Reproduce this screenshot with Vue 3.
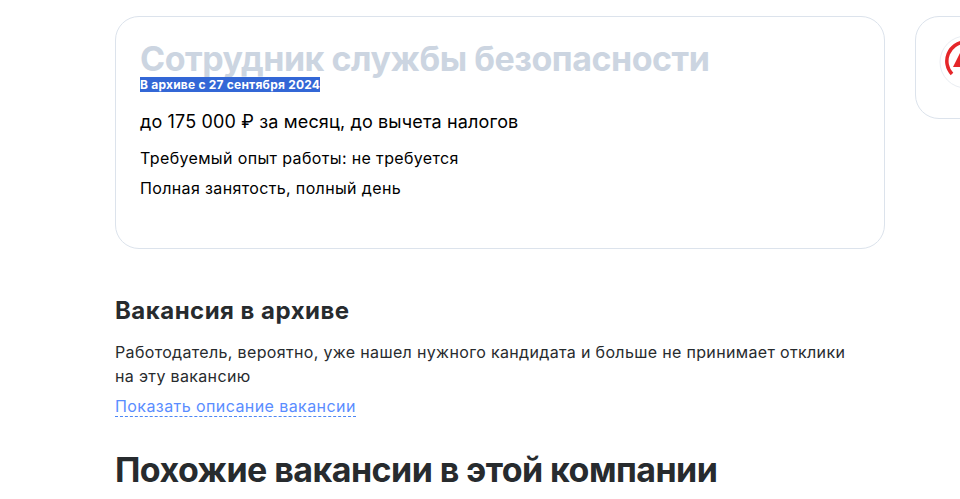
<script setup>
const conditions = ['Требуемый опыт работы: не требуется', 'Полная занятость, полный день'];
</script>

<template>
  <div class="page">
    <div class="top-row">
      <section class="card">
        <h1 class="title">Сотрудник службы безопасности</h1>
        <div class="archived"><span class="selected">В архиве с 27 сентября 2024</span></div>
        <p class="salary">до 175 000 ₽ за месяц, до вычета налогов</p>
        <p v-for="item in conditions" :key="item" class="condition">{{ item }}</p>
      </section>
      <aside class="side-card">
        <svg class="logo" width="54" height="54" viewBox="0 0 54 54">
          <circle cx="27" cy="25" r="26" fill="#fff" stroke="#e9edf2" />
          <path d="M13 37 A19 19 0 0 1 26 5" fill="none" stroke="#e52629" stroke-width="3.5" />
          <path d="M14 30 L22 14 L30 30 Z" fill="#e52629" />
        </svg>
      </aside>
    </div>

    <h2 class="subtitle">Вакансия в архиве</h2>
    <p class="note">Работодатель, вероятно, уже нашел нужного кандидата и больше не принимает отклики на эту вакансию</p>
    <a class="show-link">Показать описание вакансии</a>
    <h2 class="similar">Похожие вакансии в этой компании</h2>
  </div>
</template>

<style scoped>
.page {
  height: 499px;
  overflow: hidden;
  box-sizing: border-box;
  padding: 16px 0 0 115px;
  font-family: Inter, "Liberation Sans", sans-serif;
  color: #000;
}
.top-row {
  display: flex;
  gap: 30px;
  align-items: flex-start;
  width: 900px;
}
.card {
  flex: 0 0 770px;
  box-sizing: border-box;
  height: 233px;
  padding: 23px 24px 24px;
  border: 1px solid #dce3ec;
  border-radius: 24px;
}
.side-card {
  flex: 0 0 120px;
  box-sizing: border-box;
  height: 103px;
  padding: 20px 0 0 23px;
  border: 1px solid #dce3ec;
  border-radius: 24px;
}
.logo {
  display: block;
  overflow: visible;
}
.title {
  margin: 0;
  font-size: 34px;
  line-height: 37px;
  font-weight: 700;
  letter-spacing: -0.48px;
  color: #ccd5e1;
}
.archived {
  font-size: 12px;
  line-height: 15px;
  font-weight: 700;
  letter-spacing: 0.22px;
  margin-bottom: 18px;
}
.selected {
  background: #3367d6;
  color: #fff;
}
.salary {
  margin: 0 0 14px;
  font-size: 18px;
  line-height: 24px;
  letter-spacing: 0.15px;
}
.condition {
  margin: 0 0 10px;
  font-size: 16px;
  line-height: 20px;
  letter-spacing: 0.36px;
}
.subtitle {
  margin: 46px 0 0;
  font-size: 24px;
  line-height: 32px;
  font-weight: 700;
  letter-spacing: 0.48px;
  color: #272b2e;
}
.note {
  margin: 13px 0 0;
  width: 740px;
  font-size: 16px;
  line-height: 24px;
  letter-spacing: 0.34px;
  color: #272b2e;
}
.show-link {
  display: inline-block;
  margin-top: 9px;
  font-size: 16px;
  line-height: 19px;
  letter-spacing: 0.42px;
  color: #5a8dff;
  border-bottom: 1px dashed #4c86f5;
}
.similar {
  margin: 33px 0 0;
  font-size: 34px;
  line-height: 40px;
  font-weight: 700;
  letter-spacing: -0.55px;
  color: #272b2e;
}
</style>
